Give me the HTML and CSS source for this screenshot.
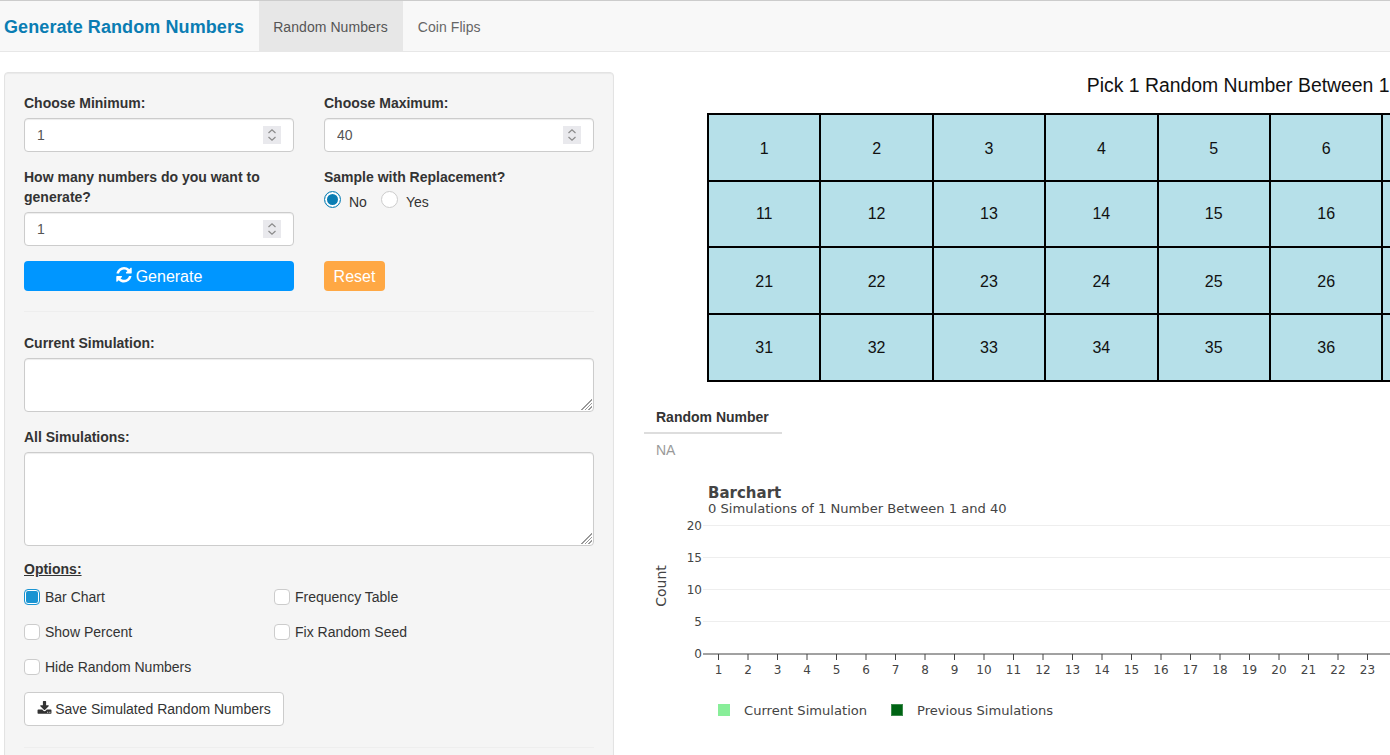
FILE: index.html
```html
<!DOCTYPE html>
<html lang="en">
<head>
<meta charset="utf-8">
<title>Generate Random Numbers</title>
<link rel="stylesheet" href="styles.css">
</head>
<body>
<nav class="navbar">
  <span class="brand">Generate Random Numbers</span>
  <a class="tab tab-active">Random Numbers</a>
  <a class="tab">Coin Flips</a>
</nav>
<main class="main">
  <aside class="panel">
    <div class="top-grid">
      <div class="group">
        <label class="label">Choose Minimum:</label>
        <div class="num"><input class="num-input" type="text" value="1"><span class="spin"><svg width="18" height="18" viewBox="0 0 18 18"><path class="chev" d="M5.5 7 9 3.8 12.500 7M5.500 11 9 14.200 12.500 11"/></svg></span></div>
      </div>
      <div class="group">
        <label class="label">Choose Maximum:</label>
        <div class="num"><input class="num-input" type="text" value="40"><span class="spin"><svg width="18" height="18" viewBox="0 0 18 18"><path class="chev" d="M5.5 7 9 3.8 12.500 7M5.500 11 9 14.200 12.500 11"/></svg></span></div>
      </div>
      <div class="group">
        <label class="label">How many numbers do you want to generate?</label>
        <div class="num"><input class="num-input" type="text" value="1"><span class="spin"><svg width="18" height="18" viewBox="0 0 18 18"><path class="chev" d="M5.5 7 9 3.8 12.500 7M5.500 11 9 14.200 12.500 11"/></svg></span></div>
      </div>
      <div class="group">
        <label class="label label-radio">Sample with Replacement?</label>
        <div class="radios">
          <span class="radio radio-on"></span><span class="radio-text">No</span>
          <span class="radio"></span><span class="radio-text">Yes</span>
        </div>
      </div>
      <button class="btn btn-primary"><svg class="icon" width="16" height="18" viewBox="0 0 1536 1792"><path fill="#fff" d="M1511 928q0 5-1 7-64 268-268 434.500t-478 166.500q-146 0-282.500-55t-243.500-157l-129 129q-19 19-45 19t-45-19-19-45v-448q0-26 19-45t45-19h448q26 0 45 19t19 45-19 45l-137 137q71 66 161 102t187 36q134 0 250-65t186-179q11-17 53-117 8-23 30-23h192q13 0 22.500 9.500t9.500 22.500zm25-800v448q0 26-19 45t-45 19h-448q-26 0-45-19t-19-45 19-45l138-138q-148-137-349-137-134 0-250 65t-186 179q-11 17-53 117-8 23-30 23h-199q-13 0-22.500-9.500t-9.500-22.500v-7q65-268 270-434.500t480-166.500q146 0 284 55.500t245 156.500l130-129q19-19 45-19t45 19 19 45z"/></svg>Generate</button>
      <div><button class="btn btn-reset">Reset</button></div>
    </div>
    <hr class="rule">
    <label class="label">Current Simulation:</label>
    <textarea class="area area-small"></textarea>
    <label class="label">All Simulations:</label>
    <textarea class="area area-large"></textarea>
    <div class="options-title">Options:</div>
    <div class="checks">
      <div class="check"><span class="box box-on"></span>Bar Chart</div>
      <div class="check"><span class="box"></span>Frequency Table</div>
      <div class="check"><span class="box"></span>Show Percent</div>
      <div class="check"><span class="box"></span>Fix Random Seed</div>
      <div class="check"><span class="box"></span>Hide Random Numbers</div>
    </div>
    <button class="btn btn-save"><svg class="icon-save" width="15" height="15" viewBox="0 0 1792 1792"><path fill="#333" d="M1344 1344q0-26-19-45t-45-19-45 19-19 45 19 45 45 19 45-19 19-45zm256 0q0-26-19-45t-45-19-45 19-19 45 19 45 45 19 45-19 19-45zm128-224v320q0 40-28 68t-68 28h-1472q-40 0-68-28t-28-68v-320q0-40 28-68t68-28h465l135 136q58 56 136 56t136-56l136-136h464q40 0 68 28t28 68zm-325-569q17 41-14 70l-448 448q-18 19-45 19t-45-19l-448-448q-31-29-14-70 17-39 59-39h256v-448q0-26 19-45t45-19h256q26 0 45 19t19 45v448h256q42 0 59 39z"/></svg>Save Simulated Random Numbers</button>
    <hr class="rule rule-end">
  </aside>
  <section class="content">
    <h2 class="grid-title">Pick 1 Random Number Between 1 and 40</h2>
    <table class="number-grid">
      <tr><td>1</td><td>2</td><td>3</td><td>4</td><td>5</td><td>6</td><td>7</td><td>8</td><td>9</td><td>10</td></tr>
      <tr><td>11</td><td>12</td><td>13</td><td>14</td><td>15</td><td>16</td><td>17</td><td>18</td><td>19</td><td>20</td></tr>
      <tr><td>21</td><td>22</td><td>23</td><td>24</td><td>25</td><td>26</td><td>27</td><td>28</td><td>29</td><td>30</td></tr>
      <tr><td>31</td><td>32</td><td>33</td><td>34</td><td>35</td><td>36</td><td>37</td><td>38</td><td>39</td><td>40</td></tr>
    </table>
    <table class="result">
      <thead><tr><th>Random Number</th></tr></thead>
      <tbody><tr><td>NA</td></tr></tbody>
    </table>
    <svg class="chart" width="760" height="250" viewBox="0 0 760 250">
      <text class="c-title" x="64" y="18">Barchart</text>
      <text class="c-sub" x="64" y="33">0 Simulations of 1 Number Between 1 and 40</text>
      <path class="c-grid" d="M59 45.500H760M59 77.500H760M59 109.500H760M59 141.500H760"/>
      <path class="c-axis" d="M59 174H760M74.500 174v6M104 174v6M133.500 174v6M163 174v6M192.500 174v6M222 174v6M251.500 174v6M281 174v6M310.500 174v6M340 174v6M369.500 174v6M399 174v6M428.500 174v6M458 174v6M487.500 174v6M517 174v6M546.500 174v6M576 174v6M605.500 174v6M635 174v6M664.500 174v6M694 174v6M723.500 174v6"/>
      <g class="c-ylab">
        <text x="58" y="50">20</text><text x="58" y="82">15</text><text x="58" y="114">10</text><text x="58" y="146">5</text><text x="58" y="178">0</text>
      </g>
      <g class="c-xlab">
        <text x="74.500" y="194">1</text><text x="104" y="194">2</text><text x="133.500" y="194">3</text><text x="163" y="194">4</text><text x="192.500" y="194">5</text><text x="222" y="194">6</text><text x="251.500" y="194">7</text><text x="281" y="194">8</text><text x="310.500" y="194">9</text><text x="340" y="194">10</text><text x="369.500" y="194">11</text><text x="399" y="194">12</text><text x="428.500" y="194">13</text><text x="458" y="194">14</text><text x="487.500" y="194">15</text><text x="517" y="194">16</text><text x="546.500" y="194">17</text><text x="576" y="194">18</text><text x="605.500" y="194">19</text><text x="635" y="194">20</text><text x="664.500" y="194">21</text><text x="694" y="194">22</text><text x="723.500" y="194">23</text>
      </g>
      <text class="c-ytitle" transform="translate(22 106) rotate(-90)">Count</text>
      <rect class="c-leg-a" x="74" y="224" width="12" height="12"/>
      <text class="c-leg" x="100" y="235">Current Simulation</text>
      <rect class="c-leg-b" x="247.500" y="224.500" width="11" height="11"/>
      <text class="c-leg" x="273" y="235">Previous Simulations</text>
    </svg>
  </section>
</main>
</body>
</html>
```
FILE: styles.css
```css
* { box-sizing: border-box; }
html, body { margin: 0; height: 755px; overflow: hidden; }
body { background: #fff; color: #333; font: 14px/20px "Liberation Sans", Arial, sans-serif; }

.navbar { display: flex; height: 52px; background: #f8f8f8; border-top: 1px solid #ccc; border-bottom: 1px solid #e7e7e7; }
.brand { padding: 0 15px 0 4px; font-size: 18px; font-weight: 700; line-height: 52px; letter-spacing: .09px; color: #0a7db3; }
.tab { padding: 0 15px; line-height: 52px; letter-spacing: .07px; color: #666; }
.tab-active { padding-left: 14px; background: #e7e7e7; color: #555; }

.main { display: flex; align-items: flex-start; padding: 20px 0 0 4px; width: 2000px; }
.panel { flex: none; width: 610px; height: 760px; padding: 20px 19px; background: #f5f5f5; border: 1px solid #e3e3e3; border-radius: 4px; box-shadow: inset 0 1px 1px rgba(0,0,0,.05); }

.top-grid { display: grid; grid-template-columns: 270px 270px; column-gap: 30px; row-gap: 15px; align-items: start; }
.label { display: block; margin-bottom: 5px; font-weight: 700; }
.label-radio { margin-bottom: 4px; }

.num { display: flex; align-items: center; height: 34px; padding: 0 12px; background: #fff; border: 1px solid #ccc; border-radius: 4px; box-shadow: inset 0 1px 1px rgba(0,0,0,.075); }
.num-input { flex: 1; min-width: 0; padding: 0; border: 0; outline: 0; background: none; color: #555; font: inherit; }
.spin { display: block; flex: none; width: 18px; height: 18px; background: #e9e9ed; }
.spin svg { display: block; }
.chev { fill: none; stroke: #8a8a8a; stroke-width: 1.2; }

.radios { display: flex; align-items: center; height: 20px; }
.radio { flex: none; width: 17px; height: 17px; margin-bottom: 3px; background: #fff; border: 1px solid #ccc; border-radius: 50%; }
.radio-on { border: 1px solid #0a7db3; box-shadow: inset 0 0 0 2px #fff, inset 0 0 0 9px #0a7db3; }
.radio-text { margin: 1px 14px 0 8px; }

.btn { display: block; margin: 0; font: inherit; cursor: pointer; border-radius: 4px; }
.btn-primary { width: 270px; height: 30px; padding: 1px 0 0; background: #0096ff; border: 0; color: #fff; font-size: 16px; }
.icon { margin-right: 4px; vertical-align: -3px; }
.btn-reset { width: 61px; height: 30px; padding: 1px 0 0; background: #ffa844; border: 0; color: #fff; font-size: 16px; }

.rule { height: 1px; margin: 20px 0 21px; border: 0; background: #eee; }
.rule-end { margin-top: 21px; }

.area { display: block; width: 100%; padding: 6px 12px; border: 1px solid #ccc; border-radius: 4px; box-shadow: inset 0 1px 1px rgba(0,0,0,.075); font: inherit; outline: 0; margin-bottom: 15px; resize: none;
  background:
    linear-gradient(135deg, #fff 50%, transparent 50%) right 1px bottom 1px / 12px 12px no-repeat,
    repeating-linear-gradient(135deg, #fff 0 1.4px, #999 1.4px 2.5px) right 1px bottom 1px / 12px 12px no-repeat,
    #fff; }
.area-small { height: 54px; }
.area-large { height: 94px; margin-bottom: 13px; }

.options-title { margin-bottom: 8px; font-weight: 700; text-decoration: underline; }
.checks { display: grid; grid-template-columns: 250px 250px; row-gap: 15px; margin-bottom: 15px; }
.check { display: flex; align-items: center; height: 20px; }
.box { flex: none; width: 16px; height: 16px; margin-right: 5px; background: #fff; border: 1px solid #ccc; border-radius: 4px; }
.box-on { border: 1px solid #1a94d2; box-shadow: inset 0 0 0 1px #fff, inset 0 0 0 8px #1a94d2; }

.btn-save { width: 260px; height: 34px; padding: 0; background: #fff; border: 1px solid #ccc; color: #333; }
.icon-save { margin-right: 3px; vertical-align: -2px; }

.content { flex: none; width: 1300px; margin-left: 30px; }
.grid-title { width: 1125px; margin: 0 0 15px 64px; font-size: 19.4px; font-weight: 400; line-height: 26px; text-align: center; color: #111; }
.number-grid { width: 1126px; margin-left: 63px; table-layout: fixed; border-collapse: collapse; }
.number-grid td { height: 67px; padding: 2px 0 0; background: #b6e0e9; border: 2px solid #000; font-size: 16px; text-align: center; color: #111; }
.number-grid tr:nth-child(even) td { padding-top: 0; }
.number-grid tr:nth-child(2) td { height: 66px; }

.result { width: 138px; margin-top: 23px; border-collapse: collapse; }
.result th { padding: 2px 12px 5px; border-bottom: 2px solid #ddd; font-weight: 700; text-align: left; color: #333; }
.result td { padding: 6px 12px; color: #999; }

.chart { display: block; margin-top: 14px; overflow: hidden; }
.chart text { font-family: "DejaVu Sans", Verdana, sans-serif; fill: #444; }
.c-title { font-size: 15px; font-weight: 700; }
.c-sub { font-size: 13.1px; }
.c-grid { fill: none; stroke: #eee; stroke-width: 1; }
.c-axis { fill: none; stroke: #444; stroke-width: 1; }
.c-ylab text { font-size: 12px; text-anchor: end; }
.c-xlab text { font-size: 12px; text-anchor: middle; }
.c-ytitle { font-size: 14px; text-anchor: middle; }
.c-leg { font-size: 13.1px; }
.c-leg-a { fill: #88ee99; }
.c-leg-b { fill: #006414; stroke: #3c8a4c; stroke-width: 1; }
```
